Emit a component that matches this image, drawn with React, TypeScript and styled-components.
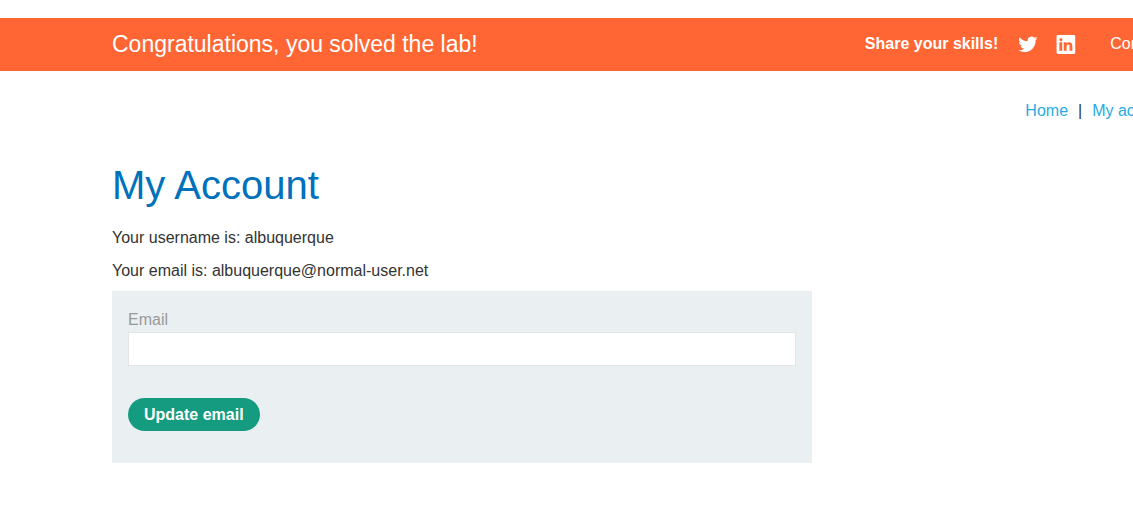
import React from "react";
import styled, { createGlobalStyle } from "styled-components";

const GlobalStyle = createGlobalStyle`
  *, *::before, *::after { box-sizing: border-box; }
  body {
    margin: 0;
    background: #fff;
    color: #333332;
    font-family: Arial, "Liberation Sans", sans-serif;
    font-size: 16px;
    line-height: 24px;
  }
`;

const Page = styled.div`
  padding: 18px 0 60px;
  overflow-x: hidden;
`;

const Container = styled.div`
  min-width: 1140px;
  margin-left: 112px;
`;

const Banner = styled.section`
  background: #ff6633;
  color: #fff;
`;

const BannerRow = styled(Container)`
  display: flex;
  align-items: center;
  justify-content: space-between;
  padding: 14px 3px 15px 0;
`;

const BannerTitle = styled.h4`
  margin: 0;
  font-size: 23px;
  font-weight: 400;
  white-space: nowrap;
`;

const Share = styled.div`
  display: flex;
  align-items: center;
  white-space: nowrap;
`;

const ShareLabel = styled.span`
  margin-right: 18px;
  font-weight: 700;
`;

const IconButton = styled.button`
  display: flex;
  margin: 0 14px 0 0;
  padding: 0;
  border: 0;
  background: none;
  color: inherit;
  cursor: pointer;
`;

const BannerLink = styled.a`
  margin-left: 18px;
  color: #fff;
  text-decoration: none;
`;

const Nav = styled.nav`
  display: flex;
  justify-content: flex-end;
  gap: 10px;
  padding: 28px 78px 0 0;
`;

const NavLink = styled.a`
  color: #29abe2;
  text-decoration: none;
`;

const Title = styled.h1`
  margin: 37px 0 16px;
  color: #0071bc;
  font-size: 40px;
  font-weight: 400;
  line-height: 50px;
`;

const Detail = styled.p`
  margin: 9px 0 8px;
`;

const Form = styled.form`
  display: flex;
  flex-direction: column;
  align-items: flex-start;
  max-width: 700px;
  padding: 17px 16px 32px;
  background: #eaf0f2;
`;

const Label = styled.label`
  color: #999;
`;

const Input = styled.input`
  width: 100%;
  height: 34px;
  margin: 0 0 32px;
  padding: 0 8px;
  border: 1px solid #e4e4e4;
  border-radius: 0;
  background: #fff;
  font: inherit;
`;

const SubmitButton = styled.button`
  height: 33px;
  padding: 0 16px;
  border: 0;
  border-radius: 17px;
  background: #159b80;
  color: #fff;
  font: inherit;
  font-weight: 700;
  cursor: pointer;
`;

function TwitterIcon() {
  return (
    <svg width="24" height="24" viewBox="0 -0.5 24 24" fill="currentColor" aria-hidden="true">
      <path d="M21.5 5.8a8.5 8.5 0 0 1-2.26.64 4.13 4.13 0 0 0 1.71-2.17 8.2 8.2 0 0 1-2.51.95 3.94 3.94 0 0 0-6.7 3.59 11.2 11.2 0 0 1-8.11-4.12 3.94 3.94 0 0 0 1.21 5.26 3.9 3.9 0 0 1-1.78-.49v.05a3.94 3.94 0 0 0 3.16 3.84 3.9 3.9 0 0 1-1.78.08 3.94 3.94 0 0 0 3.68 2.73A7.9 7.9 0 0 1 2.3 17.8a11.1 11.1 0 0 0 6.03 1.77A11.12 11.12 0 0 0 19.54 7.85a8 8 0 0 0 1.96-2.05Z" />
    </svg>
  );
}

function LinkedinIcon() {
  return (
    <svg width="24" height="24" viewBox="0 0 24 24" fill="currentColor" aria-hidden="true">
      <path
        transform="translate(0.6 1.2) scale(0.94)"
        d="M20.47 2H3.53A1.45 1.45 0 0 0 2.06 3.43v17.14A1.45 1.45 0 0 0 3.53 22h16.94a1.45 1.45 0 0 0 1.47-1.43V3.43A1.45 1.45 0 0 0 20.47 2ZM8.09 18.74h-3v-9h3ZM6.59 8.48a1.56 1.56 0 1 1 0-3.12 1.57 1.57 0 1 1 0 3.12Zm12.32 10.26h-3v-4.83c0-1.21-.43-2-1.52-2A1.65 1.65 0 0 0 12.85 13a2 2 0 0 0-.1.73v5h-3v-9h3V11a3 3 0 0 1 2.71-1.5c2 0 3.45 1.29 3.45 4.06Z"
      />
    </svg>
  );
}

export default function App() {
  return (
    <>
      <GlobalStyle />
      <Page>
        <Banner>
          <BannerRow>
            <BannerTitle>Congratulations, you solved the lab!</BannerTitle>
            <Share>
              <ShareLabel>Share your skills!</ShareLabel>
              <IconButton type="button" aria-label="Share on Twitter">
                <TwitterIcon />
              </IconButton>
              <IconButton type="button" aria-label="Share on LinkedIn">
                <LinkedinIcon />
              </IconButton>
              <BannerLink href="#">Continue learning »</BannerLink>
            </Share>
          </BannerRow>
        </Banner>
        <Container>
          <Nav>
            <NavLink href="#">Home</NavLink>
            <span>|</span>
            <NavLink href="#">My account</NavLink>
          </Nav>
          <main>
            <Title>My Account</Title>
            <Detail>Your username is: albuquerque</Detail>
            <Detail>Your email is: albuquerque@normal-user.net</Detail>
            <Form onSubmit={(event) => event.preventDefault()}>
              <Label htmlFor="email">Email</Label>
              <Input id="email" type="email" name="email" />
              <SubmitButton type="submit">Update email</SubmitButton>
            </Form>
          </main>
        </Container>
      </Page>
    </>
  );
}
